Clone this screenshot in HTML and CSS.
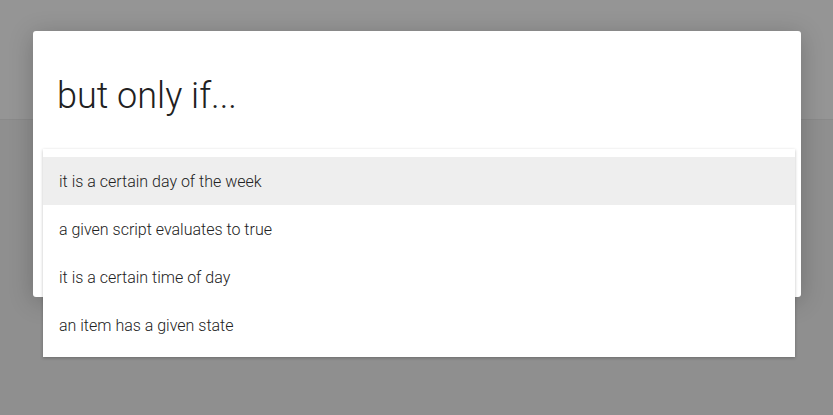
FILE: index.html
```html
<html lang="en">
<head>
    <meta name="viewport" content="width=device-width, initial-scale=1.0">
    <title>Rule condition</title>
    <link rel="stylesheet" href="styles.css">
</head>
<body>
    <div class="pageHeader"></div>
    <div class="pageBody"></div>
    <div class="overlay">
        <div class="dialog">
            <h2 class="dialogTitle">but only if...</h2>
            <div class="dialogContent">
                <!-- dropdown opens over the dialog, so it hangs below it -->
                <ul class="menu">
                    <li class="menuItem active">it is a certain day of the week</li>
                    <li class="menuItem">a given script evaluates to true</li>
                    <li class="menuItem">it is a certain time of day</li>
                    <li class="menuItem">an item has a given state</li>
                </ul>
            </div>
        </div>
    </div>
</body>
</html>
```

FILE: styles.css
```css
body {
    font-family: Roboto, "Liberation Sans", sans-serif;
    background-color: #8f8f8f;
    margin: 0;
    height: 415px;
    overflow: hidden;
}
.pageHeader {
    height: 119px;
    background-color: #959595;
    border-bottom: 1px solid #8a8a8a;
}
.overlay {
    position: absolute;
    top: 0;
    left: 0;
    right: 0;
    bottom: 0;
    padding: 31px 32px 0 33px;
}
.dialog {
    background-color: #fff;
    height: 266px;
    border-radius: 3px;
    box-shadow: 0 4px 24px rgba(0,0,0,0.22);
    box-sizing: border-box;
    padding: 0 6px 0 10px;
}
.dialogTitle {
    margin: 0;
    padding: 45px 0 0 14px;
    height: 118px;
    box-sizing: border-box;
    font-size: 36px;
    font-weight: 300;
    color: #212121;
    line-height: 40px;
}
.dialogContent {
    position: relative;
}
.menu {
    position: absolute;
    top: 0;
    left: 0;
    right: 0;
    list-style: none;
    margin: 0;
    padding: 8px 0;
    background-color: #fff;
    box-shadow: 0 1px 3px rgba(0,0,0,0.25);
}
.menuItem {
    height: 48px;
    line-height: 50px;
    box-sizing: border-box;
    padding: 0 16px;
    font-size: 16px;
    font-weight: 300;
    color: #222;
    overflow: hidden;
}
.menuItem.active {
    background-color: #eeeeee;
}
```
